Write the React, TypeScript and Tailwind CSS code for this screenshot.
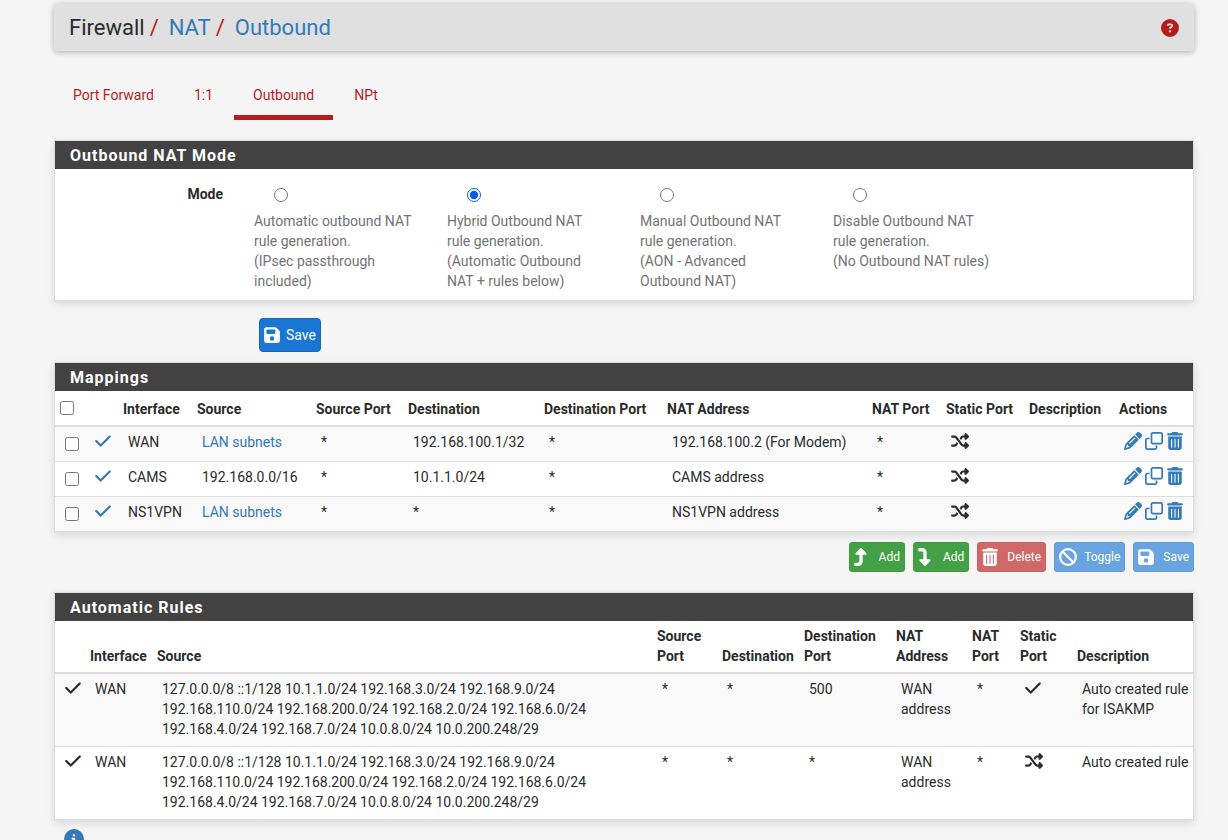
import type { ReactNode } from "react";
import {
  FaBan,
  FaCheck,
  FaCircleInfo,
  FaCircleQuestion,
  FaFloppyDisk,
  FaPencil,
  FaRegClone,
  FaShuffle,
  FaTrashCan,
  FaTurnDown,
  FaTurnUp,
} from "react-icons/fa6";

const LINK = "text-[#337ab7] hover:underline";

// Icon boxes: square glyphs, 7:8 glyphs and 3:4 glyphs at one common height.
const SQUARE = "h-[18px] w-[18px]";
const NARROW = "h-[18px] w-4";
const SLIM = "h-[18px] w-[14px]";

const TABS = ["Port Forward", "1:1", "Outbound", "NPt"];

const MODES = [
  { id: "automatic", text: "Automatic outbound NAT rule generation.", note: "(IPsec passthrough included)" },
  { id: "hybrid", text: "Hybrid Outbound NAT rule generation.", note: "(Automatic Outbound NAT + rules below)" },
  { id: "advanced", text: "Manual Outbound NAT rule generation.", note: "(AON - Advanced Outbound NAT)" },
  { id: "disabled", text: "Disable Outbound NAT rule generation.", note: "(No Outbound NAT rules)" },
];

const MAPPINGS = [
  { iface: "WAN", source: "LAN subnets", alias: true, dest: "192.168.100.1/32", nat: "192.168.100.2 (For Modem)" },
  { iface: "CAMS", source: "192.168.0.0/16", alias: false, dest: "10.1.1.0/24", nat: "CAMS address" },
  { iface: "NS1VPN", source: "LAN subnets", alias: true, dest: "*", nat: "NS1VPN address" },
];

const SOURCES =
  "127.0.0.0/8 ::1/128 10.1.1.0/24 192.168.3.0/24 192.168.9.0/24 192.168.110.0/24 192.168.200.0/24 192.168.2.0/24 192.168.6.0/24 192.168.4.0/24 192.168.7.0/24 10.0.8.0/24 10.0.200.248/29";

const AUTO_RULES = [
  { port: "500", isStatic: true, description: "Auto created rule for ISAKMP" },
  { port: "*", isStatic: false, description: "Auto created rule" },
];

function Panel({ title, children }: { title: string; children: ReactNode }) {
  return (
    <section className="border border-[#dddddd] bg-white shadow-[0_3px_8px_rgba(0,0,0,0.12)]">
      <h2 className="bg-[#424242] px-[15px] pt-[5px] pb-[3px] text-base leading-5 font-bold tracking-[1px] text-white">
        {title}
      </h2>
      {children}
    </section>
  );
}

function Th({ children }: { children?: ReactNode }) {
  return <th className="px-[5px] pt-[5px] pb-[6px] text-left align-bottom font-bold">{children}</th>;
}

function Td({ children }: { children?: ReactNode }) {
  return <td className="pt-[5px] pr-1 pb-[7px] pl-[10px] align-top">{children}</td>;
}

function SmallButton({ tone, icon, children }: { tone: string; icon: ReactNode; children: ReactNode }) {
  return (
    <button
      type="button"
      className={`flex h-[30px] items-center gap-[7px] rounded-[3px] border px-1 text-xs text-white ${tone}`}
    >
      <span className="w-[18px]">{icon}</span>
      {children}
    </button>
  );
}

const GREEN = "border-[#3d9a41] bg-[#43a047]";
const BLUE = "border-[#629ddb] bg-[#69a3e0]";
const RED = "border-[#cf6060] bg-[#cf6868]";

export default function App() {
  return (
    <div className="min-h-screen bg-[#f5f5f5] px-[34px] pt-1 pl-[54px] font-[Roboto,sans-serif] text-sm leading-5 text-[#2b2b2b]">
      <header className="flex h-[47px] items-center justify-between rounded-[4px] bg-[#e0e0e0] px-[15px] shadow-[0_1px_6px_rgba(0,0,0,0.3)]">
        <h1 className="flex text-[22px] leading-6">
          <span>Firewall</span>
          <span className="mr-[10px] ml-[5px] text-[#b71c1c]">/</span>
          <a href="#nat" className={LINK}>NAT</a>
          <span className="mr-[10px] ml-[5px] text-[#b71c1c]">/</span>
          <a href="#outbound" className={LINK}>Outbound</a>
        </h1>
        <a href="#help" aria-label="Help" className="text-[#b71c1c]">
          <FaCircleQuestion size={18} />
        </a>
      </header>

      <nav className="my-5 flex gap-[2px]">
        {TABS.map((tab) => (
          <a
            key={tab}
            href="#tab"
            className={`border-b-[5px] px-[19px] pt-[14px] pb-[10px] text-[#b71c1c] ${
              tab === "Outbound" ? "border-[#b71c1c]" : "border-transparent"
            }`}
          >
            {tab}
          </a>
        ))}
      </nav>

      <form>
        <Panel title="Outbound NAT Mode">
          <fieldset
            aria-label="Mode"
            className="grid grid-cols-[184fr_193fr_193fr_193fr_193fr_182fr] pt-[15px] pb-[9px]"
          >
            <span className="pr-4 text-right font-bold">Mode</span>
            {MODES.map((mode) => (
              <label key={mode.id} className="pr-[18px] pl-[15px] text-[#737373]">
                <input
                  type="radio"
                  name="mode"
                  defaultChecked={mode.id === "hybrid"}
                  className="mt-1 mb-[9px] ml-5 block size-[14px] accent-[#0060df]"
                />
                {mode.text}
                <br />
                {mode.note}
              </label>
            ))}
          </fieldset>
        </Panel>
        <button
          type="submit"
          className="mt-[17px] mb-[10px] ml-[205px] flex h-[34px] items-center gap-[6px] rounded-[4px] border border-[#1565c0] bg-[#1976d2] px-1 text-white"
        >
          <FaFloppyDisk className={NARROW} />
          Save
        </button>
      </form>

      <Panel title="Mappings">
        <table className="w-full table-fixed border-collapse">
          <colgroup>
            <col className="w-[30px]" />
            <col className="w-[33px]" />
            <col className="w-[74px]" />
            <col className="w-[119px]" />
            <col className="w-[92px]" />
            <col className="w-[136px]" />
            <col className="w-[123px]" />
            <col className="w-[205px]" />
            <col className="w-[74px]" />
            <col className="w-[83px]" />
            <col className="w-[90px]" />
            <col className="w-[79px]" />
          </colgroup>
          <thead className="border-b-2 border-[#dddddd]">
            <tr className="h-[35px]">
              <Th>
                <input type="checkbox" aria-label="Select all" className="mb-1 block size-[14px]" />
              </Th>
              <Th />
              <Th>Interface</Th>
              <Th>Source</Th>
              <Th>Source Port</Th>
              <Th>Destination</Th>
              <Th>Destination Port</Th>
              <Th>NAT Address</Th>
              <Th>NAT Port</Th>
              <Th>Static Port</Th>
              <Th>Description</Th>
              <Th>Actions</Th>
            </tr>
          </thead>
          <tbody>
            {MAPPINGS.map((row) => (
              <tr key={row.iface} className="h-[35px] border-[#dddddd] odd:bg-[#f9f9f9] not-first:border-t">
                <Td>
                  <input type="checkbox" aria-label={`Select ${row.iface}`} className="mt-[5px] block size-[14px]" />
                </Td>
                <Td>
                  <FaCheck className={`${NARROW} text-[#337ab7]`} />
                </Td>
                <Td>{row.iface}</Td>
                <Td>{row.alias ? <a href="#alias" className={LINK}>{row.source}</a> : row.source}</Td>
                <Td>*</Td>
                <Td>{row.dest}</Td>
                <Td>*</Td>
                <Td>{row.nat}</Td>
                <Td>*</Td>
                <Td>
                  <FaShuffle className={SQUARE} />
                </Td>
                <Td />
                <Td>
                  <div className="flex gap-[3px] text-[#337ab7]">
                    <a href="#edit" aria-label="Edit"><FaPencil className={SQUARE} /></a>
                    <a href="#copy" aria-label="Copy"><FaRegClone className={SQUARE} /></a>
                    <a href="#delete" aria-label="Delete"><FaTrashCan className={SQUARE} /></a>
                  </div>
                </Td>
              </tr>
            ))}
          </tbody>
        </table>
      </Panel>

      <div className="mt-[10px] mb-5 flex justify-end gap-2">
        <SmallButton tone={GREEN} icon={<FaTurnUp className={SLIM} />}>Add</SmallButton>
        <SmallButton tone={GREEN} icon={<FaTurnDown className={SLIM} />}>Add</SmallButton>
        <SmallButton tone={RED} icon={<FaTrashCan className={NARROW} />}>Delete</SmallButton>
        <SmallButton tone={BLUE} icon={<FaBan className={SQUARE} />}>Toggle</SmallButton>
        <SmallButton tone={BLUE} icon={<FaFloppyDisk className={NARROW} />}>Save</SmallButton>
      </div>

      <Panel title="Automatic Rules">
        <table className="w-full table-fixed border-collapse">
          <colgroup>
            <col className="w-[30px]" />
            <col className="w-[67px]" />
            <col className="w-[500px]" />
            <col className="w-[65px]" />
            <col className="w-[82px]" />
            <col className="w-[92px]" />
            <col className="w-[76px]" />
            <col className="w-[48px]" />
            <col className="w-[57px]" />
            <col className="w-[121px]" />
          </colgroup>
          <thead className="border-b-2 border-[#dddddd]">
            <tr>
              <Th />
              <Th>Interface</Th>
              <Th>Source</Th>
              <Th>Source Port</Th>
              <Th>Destination</Th>
              <Th>Destination Port</Th>
              <Th>NAT Address</Th>
              <Th>NAT Port</Th>
              <Th>Static Port</Th>
              <Th>Description</Th>
            </tr>
          </thead>
          <tbody>
            {AUTO_RULES.map((rule) => (
              <tr key={rule.port} className="border-[#dddddd] odd:bg-[#f9f9f9] not-first:border-t">
                <Td>
                  <FaCheck className={NARROW} />
                </Td>
                <Td>WAN</Td>
                <Td>
                  <div className="max-w-[440px]">{SOURCES}</div>
                </Td>
                <Td>*</Td>
                <Td>*</Td>
                <Td>{rule.port}</Td>
                <Td>WAN address</Td>
                <Td>*</Td>
                <Td>{rule.isStatic ? <FaCheck className={NARROW} /> : <FaShuffle className={SQUARE} />}</Td>
                <Td>{rule.description}</Td>
              </tr>
            ))}
          </tbody>
        </table>
      </Panel>

      <button type="button" aria-label="Information" className="mt-[9px] ml-[10px] block text-[#337ab7]">
        <FaCircleInfo size={20} />
      </button>
    </div>
  );
}
